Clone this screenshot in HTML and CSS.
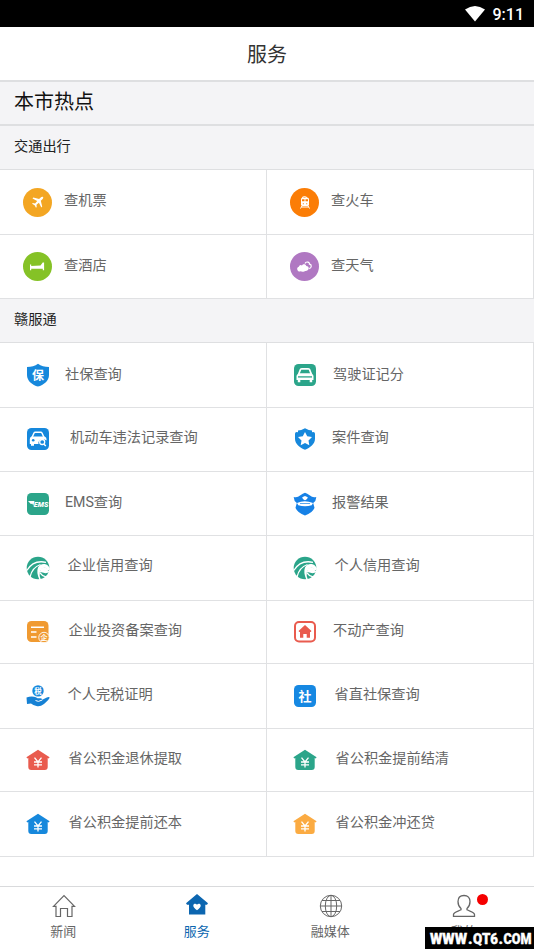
FILE: index.html
```html
<!DOCTYPE html>
<html lang="zh-CN">
<head>
<meta charset="utf-8">
<title>服务</title>
<link rel="stylesheet" href="styles.css">
</head>
<body>
<svg class="defs" aria-hidden="true">
  <symbol id="fund" viewBox="0 0 24 22">
    <path fill="currentColor" d="M12 .8 23.6 8.2l-.9 1.3-1-.4V18q0 3-3 3H5.300q-3 0-3-3V9.100l-1 .4-.9-1.300z"/>
    <path fill="none" stroke="#fff" stroke-width="1.300" d="m8.500 8.700 3.500 4.300 3.500-4.300M8 13h8M8 15.800h8M12 13v5.500"/>
  </symbol>
  <symbol id="credit" viewBox="0 0 24 24">
    <circle cx="12" cy="12" r="11.300" fill="#2ba58a"/>
    <path fill="#fff" d="M24 13q-1.500-4.500-5.500-5-4.500-.3-6.500 3.500-2 5 1.500 12.500h1.500q-2-4-1.200-7.500 1.200-4.500 5-4.700 2.200 0 2.500 3.700z"/>
    <path fill="#fff" d="M13.800 16.500q.5-4.500 4.200-5 3.500-.3 3.200 2.700l2.800 1.300q-3.500 2.500-6.500 1.300-1.800-.8-3.700-.3z"/>
    <path fill="none" stroke="#fff" stroke-width="1.300" d="M.8 14.500C5 7.500 11 4.300 20 6.300M4 21C5.500 14.500 8.500 10.500 14.500 8.500M14 16.800q2 3.200 6 4"/>
  </symbol>
</svg>

<div class="status">
  <svg width="20" height="16" viewBox="0 0 20 16"><path fill="#fff" d="M0 3.500Q10-3.500 20 3.500L10 15.600z"/></svg>
  <span>9:11</span>
</div>
<header class="header">服务</header>

<main class="content">
  <h1 class="hot">本市热点</h1>

  <h2 class="section">交通出行</h2>
  <div class="grid grid-travel">
    <div class="cell"><span class="icon"><svg width="29" height="29" viewBox="0 0 29 29"><circle cx="14.500" cy="14.500" r="14.500" fill="#f3a623"/><path fill="#fff" d="M20 9c-.7-.7-1.600-.2-2.300.5l-1.600 1.600-5.800-1.500-.8.9 4.700 2.500-2.100 2.400-2.300-.3-.7.7 2.500 1.500 1.400 2.500.7-.7-.2-2.300 2.400-2.100 2.400 4.700.9-.9-1.400-5.700 1.600-1.600c.7-.7 1.200-1.600.6-2.200z"/></svg></span><span class="label len-3">查机票</span></div>
    <div class="cell"><span class="icon"><svg width="29" height="29" viewBox="0 0 29 29"><circle cx="14.500" cy="14.500" r="14.500" fill="#fb7d06"/><path fill="none" stroke="#fff" d="M12 9.500q2.500-2 5 0M12.500 17l-2 3.500M17.500 17l2 3.500M11.500 19h7"/><rect x="11" y="9.500" width="8" height="8.500" rx="1.800" fill="#fff"/><path fill="#fb7d06" d="M12 11.300h2.500v2H12zM15.500 11.300H18v2h-2.500zM12.800 15.300h1v1h-1zM16.200 15.300h1v1h-1z"/></svg></span><span class="label len-3">查火车</span></div>
    <div class="cell"><span class="icon"><svg width="29" height="29" viewBox="0 0 29 29"><circle cx="14.500" cy="14.500" r="14.500" fill="#85c226"/><path fill="#fff" d="M7 12.500h1.200V14l9.300-.4 2.200-3.100h1.400v7.700h-1.300v-1.500H8.200v1.500H7z"/></svg></span><span class="label len-3">查酒店</span></div>
    <div class="cell"><span class="icon"><svg width="29" height="29" viewBox="0 0 29 29"><circle cx="14.500" cy="14.500" r="14.500" fill="#b078c2"/><path fill="none" stroke="#fff" stroke-width="1.200" d="M15 11.500c1-2.500 5-1.500 4.500.7 2.500.3 2.300 3.600-.3 4.400"/><path fill="#fff" d="M10.500 19.300a2.300 2.300 0 0 1-1.700-4.500 2.300 2.300 0 0 1 3.200-1.400c.8-1.600 3.800-1.600 4.300.6 2.600 0 3.300 3 1.300 4.200-.8.700-1.700.8-2.300.7-1 .9-3.500.9-4.800.4z"/></svg></span><span class="label len-3">查天气</span></div>
  </div>

  <h2 class="section">赣服通</h2>
  <div class="grid grid-gov">
    <div class="cell"><span class="icon"><svg width="24" height="24" viewBox="0 0 24 24"><path fill="#1688dc" d="M12 .8Q16.500 4 23 4v8c0 6-5.500 10-11 11.600C6.500 22 1 18 1 12V4Q7.500 4 12 .8z"/><text class="glyph" x="12" y="16.500" font-size="12">保</text></svg></span><span class="label len-4">社保查询</span></div>
    <div class="cell"><span class="icon"><svg width="24" height="24" viewBox="0 0 24 24"><rect x="1" y="1" width="22" height="22" rx="4.500" fill="#2ba58a"/><path fill="#fff" d="m4.800 11 2-5Q7.500 5 9 5h6q1.500 0 2.200 1l2 5q1.300 1 1.300 2.300V17h-1.300v2.300h-2.500V17H7.300v2.300H4.800V17H3.500v-3.700q0-1.300 1.300-2.300z"/><path fill="#2ba58a" d="m8.300 6.800-1.400 3.400h10.200l-1.400-3.400z"/><path stroke="#2ba58a" stroke-width="1.300" d="M5 13.900h14"/></svg></span><span class="label len-5">驾驶证记分</span></div>

    <div class="cell"><span class="icon"><svg width="24" height="24" viewBox="0 0 24 24"><rect x="1" y="1" width="22" height="22" rx="4.500" fill="#1688dc"/><path fill="none" stroke="#fff" stroke-width="1.500" d="M6 10.500 8 6q.4-.7 1.300-.7h5.400q.9 0 1.300.7l2 4.500"/><path fill="#fff" d="M5.500 9.500h13q2 .5 2 2.500v1.500q-5-3-7.500.5-1 1.500-.5 3H8v1.800H5V17H3.800v-5q0-2 1.700-2.500z"/><circle cx="7.200" cy="13.300" r="1.300" fill="#1688dc"/><circle cx="16.200" cy="15" r="2.500" fill="#1688dc" stroke="#fff" stroke-width="1.300"/><path stroke="#fff" stroke-width="1.500" d="m17.800 17 2 2"/></svg></span><span class="label len-9">机动车违法记录查询</span></div>
    <div class="cell"><span class="icon"><svg width="24" height="24" viewBox="0 0 24 24"><path fill="#1688dc" d="M12 1.200q4 2.300 7 2.300v1.800q3-.8 3 1.500v5c0 5.500-5 9-10 11-5-2-10-5.500-10-11v-5q0-2.300 3-1.500V3.500q3 0 7-2.300z"/><path fill="#fff" d="m12 5 2.200 4.300 4.800.7-3.500 3.400.8 4.800-4.300-2.300-4.300 2.300.8-4.800L5 10l4.800-.7z"/></svg></span><span class="label len-4">案件查询</span></div>

    <div class="cell"><span class="icon icon-low"><svg width="24" height="24" viewBox="0 0 24 24"><rect x="1" y="1" width="22" height="22" rx="4.500" fill="#2ba58a"/><path fill="#fff" d="M2 9h6.500l-1.200 4.800-.9-2-2-.3 1 1z"/><text class="ems" x="7.800" y="14.800" textLength="14.500" lengthAdjust="spacingAndGlyphs">EMS</text></svg></span><span class="label len-4">EMS查询</span></div>
    <div class="cell"><span class="icon icon-low"><svg width="24" height="24" viewBox="0 0 24 24"><path fill="#1681e6" d="M.8 5Q4.500 6 7 3.500q3-2.300 5-2.700 2 .4 5 2.700Q19.500 6 23.200 5q.2 3.500-3 6l1.300 4.800q-2 5.200-9.500 7.700-7.500-2.500-9.500-7.700l1.300-4.800q-3.200-2.500-3-6z"/><path fill="#fff" d="M4 11q7.500-3.500 16 0l-1.300 2.300q-6.700 1.700-13.400 0zM12 4l2.800 1.200-.6 1.600q-1.200 1.400-2.200 1.400t-2.200-1.400l-.6-1.600z"/><path fill="none" stroke="#1681e6" stroke-width=".7" d="M7 11.500h10"/></svg></span><span class="label len-4">报警结果</span></div>

    <div class="cell"><span class="icon icon-low"><svg width="24" height="24"><use href="#credit"/></svg></span><span class="label len-6">企业信用查询</span></div>
    <div class="cell"><span class="icon icon-low"><svg width="24" height="24"><use href="#credit"/></svg></span><span class="label len-6">个人信用查询</span></div>

    <div class="cell"><span class="icon"><svg width="24" height="24" viewBox="0 0 24 24"><rect x="1" y="1" width="21.500" height="21" rx="4.500" fill="#f09a31"/><path stroke="#fff" stroke-width="1.400" d="M5 7.200h13M5 12h5.500M5 17h5.500"/><circle cx="18" cy="17.500" r="5.200" fill="#f09a31" stroke="#fff" stroke-width=".9"/><text class="glyph" x="18" y="20.200" font-size="7">企</text></svg></span><span class="label len-8">企业投资备案查询</span></div>
    <div class="cell"><span class="icon"><svg width="24" height="24" viewBox="0 0 24 24"><rect x="2" y="2" width="20" height="19.500" rx="4" fill="#fff" stroke="#e95b4e" stroke-width="2"/><path fill="#e95b4e" d="m12 5 6.500 6-.8 1H17v5.800h-3.300V14h-3.400v3.800H7V12h-.7l-.8-1z"/></svg></span><span class="label len-5">不动产查询</span></div>

    <div class="cell"><span class="icon"><svg width="24" height="24" viewBox="0 0 24 24"><circle cx="12" cy="6.900" r="5.700" fill="#1688dc"/><text class="glyph" x="12" y="9.600" font-size="7.500">税</text><path fill="#1681d4" d="M.5 13.500q4-1.300 7.500-.7 2 .3 3.500 1.500h3q1.800 0 1.800 1.500l4.500-2.300q2.500-1 2.900.3-.2 1.200-5.700 6.200-4 3-7.500 2-3.500-.7-5.500-2.500l-4 .5z"/><path fill="none" stroke="#fff" d="M9.500 16.500q2.500 2 6.800-.5"/></svg></span><span class="label len-6">个人完税证明</span></div>
    <div class="cell"><span class="icon"><svg width="24" height="24" viewBox="0 0 24 24"><rect x="1" y="1" width="22" height="22" rx="4.500" fill="#1688e2"/><text class="glyph" x="12" y="16.600" font-size="13">社</text></svg></span><span class="label len-6">省直社保查询</span></div>

    <div class="cell"><span class="icon fund-red"><svg width="24" height="22"><use href="#fund"/></svg></span><span class="label len-8">省公积金退休提取</span></div>
    <div class="cell"><span class="icon fund-green"><svg width="24" height="22"><use href="#fund"/></svg></span><span class="label len-8">省公积金提前结清</span></div>

    <div class="cell"><span class="icon fund-blue"><svg width="24" height="22"><use href="#fund"/></svg></span><span class="label len-8">省公积金提前还本</span></div>
    <div class="cell"><span class="icon fund-orange"><svg width="24" height="22"><use href="#fund"/></svg></span><span class="label len-8">省公积金冲还贷</span></div>
  </div>
</main>

<nav class="tabs">
  <div class="tab"><svg width="24" height="24" viewBox="0 0 24 24"><path fill="none" stroke="#666" stroke-width="1.200" d="M1.500 12.300 12 1.700l10.500 10.600H20V22.500h-4.500v-8h-7v8H4V12.300z"/></svg><span>新闻</span></div>
  <div class="tab active"><svg width="24" height="24" viewBox="0 0 24 24"><path fill="#0c66b0" d="M12 0 23 9.300l-1 1.500h-1.700V20.500H4V10.800H2L1 9.300z"/><path fill="#fff" d="M12 16.300q-3.700-2.500-3.700-4.800c0-2.200 2.800-2.500 3.700-.7.900-1.800 3.700-1.500 3.700.7q0 2.300-3.700 4.800z"/></svg><span>服务</span></div>
  <div class="tab"><svg width="24" height="24" viewBox="0 0 24 24"><g fill="none" stroke="#666"><circle cx="12" cy="12" r="10.700"/><ellipse cx="12" cy="12" rx="5.700" ry="10.700"/><path d="M12 1.300v21.400M1.300 12h21.400M3 6.500h18M3 17.500h18"/></g></svg><span>融媒体</span></div>
  <div class="tab"><svg width="24" height="24" viewBox="0 0 24 24"><path fill="none" stroke="#666" stroke-width="1.300" d="M12 1.500c-4 0-6 2.500-6 6 0 3 1.200 5.500 3 7v1.300C6.500 17.300 1.500 18 1.500 20.500v1.800h21v-1.800c0-2.500-5-3.200-7.500-4.700v-1.300c1.800-1.500 3-4 3-7 0-3.500-2-6-6-6z"/></svg><span>我的</span><i class="dot"></i></div>
</nav>
<div class="watermark"><svg width="109" height="22" viewBox="0 0 109 22"><text y="17"><tspan x="5" textLength="37" lengthAdjust="spacingAndGlyphs">WWW</tspan><tspan x="43">.</tspan><tspan x="48" textLength="25" lengthAdjust="spacingAndGlyphs">QT6</tspan><tspan x="73.500">.</tspan><tspan x="78.500" textLength="28" lengthAdjust="spacingAndGlyphs">COM</tspan></text></svg></div>
</body>
</html>
```
FILE: styles.css
```css
* { box-sizing: border-box; }

body {
  margin: 0;
  width: 534px;
  height: 949px;
  overflow: hidden;
  position: relative;
  display: flex;
  flex-direction: column;
  background: #fff;
  color: #666;
  font-family: Roboto, "Noto Sans CJK SC", sans-serif;
}

svg { display: block; flex: none; }
.defs { position: absolute; width: 0; height: 0; }

.status {
  height: 27px;
  flex: none;
  background: #000;
  color: #fff;
  display: flex;
  justify-content: flex-end;
  align-items: center;
  gap: 8px;
  padding: 0 10px 0 0;
  font-size: 16px;
  font-weight: 500;
}
.status span { padding-top: 2px; }

.header {
  height: 55px;
  flex: none;
  display: flex;
  align-items: center;
  justify-content: center;
  border-bottom: 2px solid #dedfe1;
  color: #333;
  font-size: 20px;
}

.content { flex: 1; }

.hot, .section {
  margin: 0;
  padding-left: 14px;
  background: #f4f4f6;
  display: flex;
  align-items: center;
  font-weight: 400;
}
.hot {
  height: 44px;
  padding-bottom: 5px;
  border-bottom: 2px solid #dedfe1;
  color: #111;
  font-size: 20px;
}
.section {
  height: 44px;
  padding-bottom: 5px;
  border-bottom: 1px solid #dedfe1;
  color: #222;
  font-size: 14.2px;
}

.grid { display: grid; grid-template-columns: 267px 267px; }
.grid-travel { grid-template-rows: 65px 64px; }
.grid-gov { grid-template-rows: 65px 64px 64px 65px 63px 65px 63px 65px; }

.cell {
  display: flex;
  align-items: center;
  border-right: 1px solid #e0e1e3;
  border-bottom: 1px solid #e0e1e3;
}
.grid-gov .cell:nth-child(n+3) { padding-bottom: 1px; }
.icon {
  width: 76px;
  flex: none;
  display: flex;
  justify-content: center;
}
.grid-travel .icon { padding-right: 1px; }
.icon-low { padding-top: 1px; }
.label {
  padding-bottom: 3px;
  font-size: 14.2px;
  line-height: 20px;
  white-space: nowrap;
}
.grid-travel .cell:nth-child(-n+2) .label,
.grid-gov .cell:nth-child(3) .label,
.grid-gov .cell:nth-child(4) .label,
.grid-gov .cell:nth-child(7) .label,
.grid-gov .cell:nth-child(8) .label { padding-bottom: 5px; }
.len-3 { margin-left: -12px; }
.len-4 { margin-left: -11px; }
.len-5 { margin-left: -10px; }
.len-6 { margin-left: -8.5px; }
.len-8 { margin-left: -7.5px; }
.len-9 { margin-left: -6px; }

.glyph {
  fill: #fff;
  font-family: "Noto Sans CJK SC", sans-serif;
  font-weight: 700;
  text-anchor: middle;
}
.ems {
  fill: #fff;
  font: italic 900 7.5px Roboto, sans-serif;
}

.fund-red { color: #e95b4e; }
.fund-green { color: #2ba58a; }
.fund-blue { color: #1688dc; }
.fund-orange { color: #fbab42; }

.tabs {
  height: 63px;
  flex: none;
  display: grid;
  grid-template-columns: repeat(4, 1fr);
  border-top: 1px solid #d9dadc;
}
.tab {
  position: relative;
  display: flex;
  flex-direction: column;
  align-items: center;
  gap: 4px;
  padding: 7px 6px 0 0;
  font-size: 13px;
  line-height: 20px;
}
.tab span { margin-left: -1px; }
.active { color: #0c66b0; }
.dot {
  position: absolute;
  left: 76px;
  top: 7px;
  width: 11px;
  height: 11px;
  border-radius: 50%;
  background: #f50000;
}

.watermark {
  position: absolute;
  right: 0;
  bottom: 0;
  background: #000;
}
.watermark text {
  fill: #fff;
  stroke: #fff;
  stroke-width: .4px;
  font: 900 15px Roboto, sans-serif;
}
```
